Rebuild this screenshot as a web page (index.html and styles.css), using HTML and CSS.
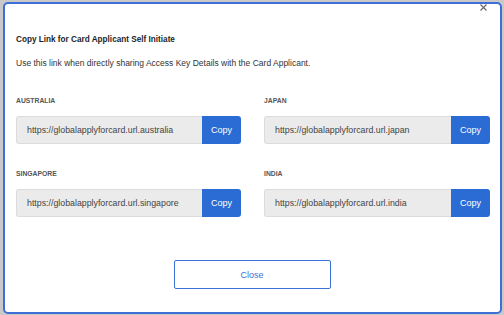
FILE: index.html
```html
<!DOCTYPE html>
<html>
<head>
<meta charset="utf-8">
<link rel="stylesheet" href="styles.css">
</head>
<body>
<div class="modal">
  <button class="x" aria-label="Close">
    <svg width="7" height="7" viewBox="0 0 7 7"><path d="M0.5 0.5L6.5 6.5M6.5 0.5L0.5 6.5" stroke="#6b6b6b" stroke-width="1.2" fill="none"/></svg>
  </button>
  <h1 class="title">Copy Link for Card Applicant Self Initiate</h1>
  <p class="desc">Use this link when directly sharing Access Key Details with the Card Applicant.</p>
  <div class="grid">
    <div class="field">
      <div class="label">AUSTRALIA</div>
      <div class="row"><div class="url">https://globalapplyforcard.url.australia</div><button class="copy">Copy</button></div>
    </div>
    <div class="field">
      <div class="label">JAPAN</div>
      <div class="row"><div class="url">https://globalapplyforcard.url.japan</div><button class="copy">Copy</button></div>
    </div>
    <div class="field">
      <div class="label">SINGAPORE</div>
      <div class="row"><div class="url">https://globalapplyforcard.url.singapore</div><button class="copy">Copy</button></div>
    </div>
    <div class="field">
      <div class="label">INDIA</div>
      <div class="row"><div class="url">https://globalapplyforcard.url.india</div><button class="copy">Copy</button></div>
    </div>
  </div>
  <div class="footer"><button class="close">Close</button></div>
</div>
</body>
</html>
```
FILE: styles.css
```css
html, body { margin: 0; padding: 0; }
body {
  background: #c9c9c9;
  width: 504px;
  height: 315px;
  overflow: hidden;
  font-family: "Liberation Sans", Arial, sans-serif;
  color: #222;
}
.modal {
  position: relative;
  box-sizing: border-box;
  margin: 2px 2px 0 3px;
  height: 312px;
  background: #fff;
  border: 2px solid #3e6fd6;
  border-radius: 5px;
  padding: 29px 12px 0 11px;
}
.x {
  position: absolute;
  top: 0;
  right: 13px;
  border: 0;
  background: none;
  padding: 0;
  width: 7px;
  height: 7px;
  display: flex;
}
.title {
  margin: 0;
  font-size: 8.2px;
  font-weight: bold;
  color: #1e1e1e;
  line-height: 14px;
}
.desc {
  margin: 9px 0 0;
  font-size: 8.5px;
  color: #333;
  line-height: 14px;
}
.grid {
  margin-top: 26px;
  display: grid;
  grid-template-columns: 225px 226px;
  column-gap: 23px;
  row-gap: 25px;
}
.label {
  font-size: 6.8px;
  font-weight: bold;
  color: #555;
  line-height: 10px;
  margin-bottom: 10px;
}
.row {
  display: flex;
  height: 28px;
}
.url {
  flex: 1;
  background: #ebebeb;
  border: 1px solid #dcdcdc;
  border-right: 0;
  border-radius: 3px 0 0 3px;
  font-size: 8.8px;
  color: #444;
  display: flex;
  align-items: center;
  padding-left: 10px;
}
.copy {
  width: 39px;
  border: 0;
  background: #2b6cd4;
  color: #fff;
  font-family: inherit;
  font-size: 9px;
  border-radius: 0 3px 3px 0;
  padding: 0;
}
.footer {
  display: flex;
  justify-content: center;
  margin-top: 43px;
}
.close {
  width: 157px;
  height: 29px;
  background: #fff;
  border: 1px solid #3a72d8;
  border-radius: 2px;
  color: #3a72d8;
  font-family: inherit;
  font-size: 9px;
}
```
